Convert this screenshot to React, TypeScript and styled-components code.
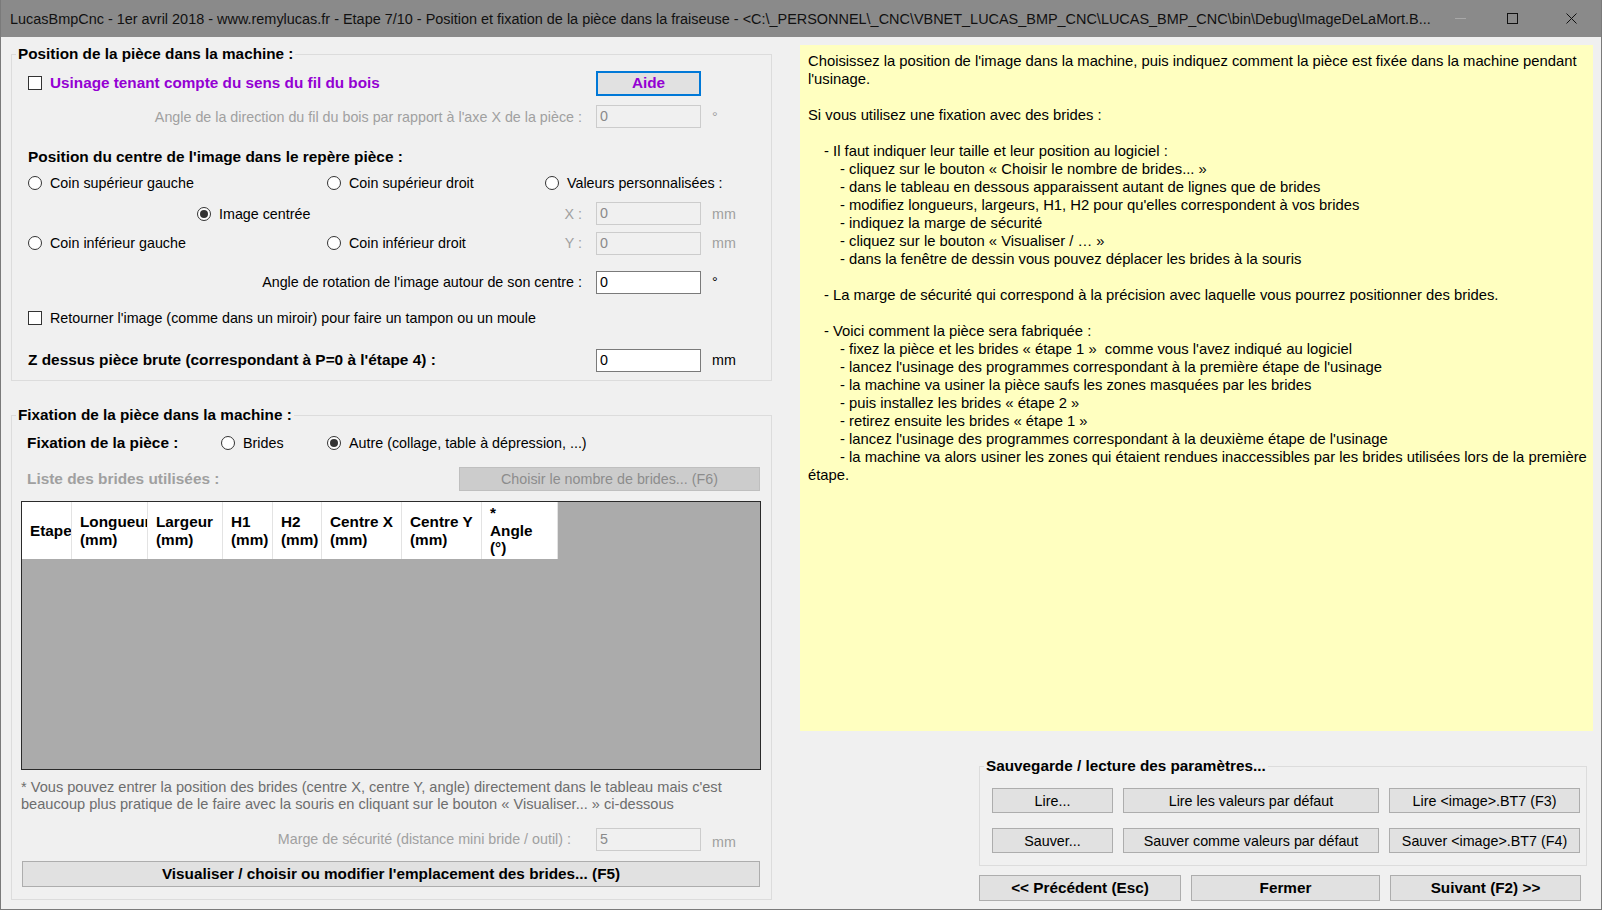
import styled, { createGlobalStyle } from "styled-components";

const GlobalStyle = createGlobalStyle`
	html, body {
		margin: 0;
		padding: 0;
		background: #f0f0f0;
	}
	body {
		font-family: "Liberation Sans", Arial, sans-serif;
		color: #000;
	}
`;

const Window = styled.div`
	width: 1602px;
	height: 910px;
	box-sizing: border-box;
	display: flex;
	flex-direction: column;
	border: 1px solid #7a7a7a;
	border-top: none;
	background: #f0f0f0;
	overflow: hidden;
`;

const TitleBar = styled.div`
	flex: none;
	height: 37px;
	display: flex;
	align-items: center;
	background: #8a8a8a;
	padding-left: 9px;
`;

const TitleText = styled.div`
	flex: 1;
	min-width: 0;
	font-family: "Liberation Sans", Arial, sans-serif;
	font-size: 14.45px;
	color: #111;
	white-space: nowrap;
	overflow: hidden;
`;

const WinControls = styled.div`
	flex: none;
	display: flex;
	height: 100%;
`;

const WinButton = styled.div<{ $w: number }>`
	width: ${(p) => p.$w}px;
	height: 100%;
	display: flex;
	align-items: center;
	justify-content: center;
`;

const Client = styled.div`
	flex: 1;
	display: flex;
	gap: 28px;
	padding: 8px 8px 0 10px;
`;

const LeftColumn = styled.div`
	width: 761px;
	flex: none;
	display: flex;
	flex-direction: column;
`;

const RightColumn = styled.div`
	width: 793px;
	flex: none;
	display: flex;
	flex-direction: column;
`;

const Group = styled.fieldset<{ $mt?: number }>`
	margin: ${(p) => p.$mt ?? 0}px 0 0 0;
	padding: 0;
	min-width: 0;
	border: 1px solid #dcdcdc;
`;

const Legend = styled.legend`
	margin-left: 4px;
	padding: 0 2px;
	font-size: 15.3px;
	font-weight: bold;
	line-height: 18px;
`;

const GroupBody = styled.div<{ $pad: string }>`
	display: flex;
	flex-direction: column;
	padding: ${(p) => p.$pad};
`;

const Row = styled.div<{ $h: number; $mt?: number; $pl?: number }>`
	flex: none;
	display: flex;
	align-items: center;
	height: ${(p) => p.$h}px;
	margin-top: ${(p) => p.$mt ?? 0}px;
	padding-left: ${(p) => p.$pl ?? 0}px;
`;

const Slot = styled.div<{ $w: number; $pl?: number }>`
	flex: none;
	width: ${(p) => p.$w}px;
	box-sizing: border-box;
	padding-left: ${(p) => p.$pl ?? 0}px;
	display: flex;
	align-items: center;
`;

const Spacer = styled.div`
	flex: 1;
`;

const Heading = styled.div<{ $muted?: boolean }>`
	font-size: 15.4px;
	font-weight: bold;
	color: ${(p) => (p.$muted ? "#a0a0a0" : "#000")};
	white-space: nowrap;
`;

const Option = styled.div<{ $bold?: boolean; $color?: string }>`
	display: inline-flex;
	align-items: center;
	gap: 8px;
	font-size: ${(p) => (p.$bold ? "15.3px" : "14.3px")};
	font-weight: ${(p) => (p.$bold ? "bold" : "normal")};
	color: ${(p) => p.$color ?? "#000"};
	white-space: nowrap;
`;

const CheckBox = styled.span`
	width: 14px;
	height: 14px;
	box-sizing: border-box;
	border: 1px solid #333;
	background: #fff;
	flex: none;
`;

const RadioDot = styled.span<{ $on?: boolean }>`
	width: 14px;
	height: 14px;
	box-sizing: border-box;
	border: 1px solid #333;
	border-radius: 50%;
	background: #fff;
	flex: none;
	display: flex;
	align-items: center;
	justify-content: center;

	&::after {
		content: "";
		width: 8px;
		height: 8px;
		border-radius: 50%;
		background: #333;
		display: ${(p) => (p.$on ? "block" : "none")};
	}
`;

const FieldLabel = styled.div<{ $disabled?: boolean }>`
	flex: 1;
	text-align: right;
	font-size: 14.3px;
	color: ${(p) => (p.$disabled ? "#a0a0a0" : "#000")};
	white-space: nowrap;
`;

const TextBox = styled.div<{ $disabled?: boolean; $gap?: number }>`
	flex: none;
	width: 105px;
	height: 23px;
	box-sizing: border-box;
	margin-left: ${(p) => p.$gap ?? 14}px;
	padding-left: 3px;
	border: 1px solid ${(p) => (p.$disabled ? "#cccccc" : "#7a7a7a")};
	background: ${(p) => (p.$disabled ? "#f0f0f0" : "#fff")};
	color: ${(p) => (p.$disabled ? "#8a8a8a" : "#000")};
	font-size: 14.3px;
	line-height: 21px;
`;

const Unit = styled.div<{ $disabled?: boolean; $dy?: number }>`
	flex: none;
	width: 40px;
	margin-left: 11px;
	font-size: 14.3px;
	color: ${(p) => (p.$disabled ? "#a0a0a0" : "#000")};
	transform: translateY(${(p) => p.$dy ?? 0}px);
`;

const Button = styled.div<{
	$w?: number;
	$h: number;
	$bold?: boolean;
	$disabled?: boolean;
	$focus?: boolean;
	$color?: string;
}>`
	flex: none;
	width: ${(p) => (p.$w ? `${p.$w}px` : "auto")};
	height: ${(p) => p.$h}px;
	box-sizing: border-box;
	display: flex;
	align-items: center;
	justify-content: center;
	border: ${(p) =>
		p.$focus
			? "2px solid #0078d7"
			: `1px solid ${p.$disabled ? "#bfbfbf" : "#adadad"}`};
	background: ${(p) => (p.$disabled ? "#cccccc" : "#e1e1e1")};
	color: ${(p) => (p.$disabled ? "#8c8c8c" : p.$color ?? "#000")};
	font-size: ${(p) => (p.$bold ? "15.3px" : "14.3px")};
	font-weight: ${(p) => (p.$bold ? "bold" : "normal")};
	white-space: nowrap;
`;

const Grid = styled.div`
	flex: none;
	margin-top: 4px;
	height: 269px;
	box-sizing: border-box;
	border: 1px solid #2a2a2a;
	background: #ababab;
	display: flex;
	flex-direction: column;
`;

const GridHeader = styled.div`
	display: flex;
	height: 57px;
	align-self: flex-start;
	background: #fff;
`;

const HeaderCell = styled.div<{ $w: number }>`
	width: ${(p) => p.$w}px;
	box-sizing: border-box;
	border-right: 1px solid #e3e3e3;
	padding-left: 8px;
	display: flex;
	align-items: center;
	overflow: hidden;
	white-space: pre;
	font-size: 15.3px;
	font-weight: bold;
	line-height: 17.5px;
`;

const Footnote = styled.div`
	margin-top: 9px;
	font-size: 14.6px;
	line-height: 17px;
	color: #6d6d6d;
	white-space: nowrap;
`;

const HelpPanel = styled.div`
	height: 686px;
	flex: none;
	box-sizing: border-box;
	background: #ffffc0;
	padding: 7px 4px 0 8px;
	font-size: 14.8px;
	line-height: 18px;
`;

const HelpLine = styled.div<{ $indent?: number }>`
	min-height: 18px;
	text-indent: ${(p) => p.$indent ?? 0}px;
	white-space: pre-wrap;
`;

const SaveGroup = styled(Group)`
	width: 608px;
	align-self: flex-end;
	margin-right: 6px;
	box-sizing: border-box;
`;

const ButtonGrid = styled.div<{ $cols: string }>`
	display: grid;
	grid-template-columns: ${(p) => p.$cols};
	column-gap: 10px;
	row-gap: 15px;
`;

const NavRow = styled(ButtonGrid)`
	align-self: flex-end;
	margin: 9px 12px 0 0;
`;

const headers = [
	{ w: 50, t: "Etape" },
	{ w: 76, t: "Longueur\n(mm)" },
	{ w: 75, t: "Largeur\n(mm)" },
	{ w: 50, t: "H1\n(mm)" },
	{ w: 49, t: "H2\n(mm)" },
	{ w: 80, t: "Centre X\n(mm)" },
	{ w: 80, t: "Centre Y\n(mm)" },
	{ w: 76, t: "*\nAngle\n(°)" },
];

const helpLines: { i?: number; t: string }[] = [
	{
		t: "Choisissez la position de l'image dans la machine, puis indiquez comment la pièce est fixée dans la machine pendant l'usinage.",
	},
	{ t: "" },
	{ t: "Si vous utilisez une fixation avec des brides :" },
	{ t: "" },
	{ i: 16, t: "- Il faut indiquer leur taille et leur position au logiciel :" },
	{ i: 32, t: "- cliquez sur le bouton « Choisir le nombre de brides... »" },
	{ i: 32, t: "- dans le tableau en dessous apparaissent autant de lignes que de brides" },
	{ i: 32, t: "- modifiez longueurs, largeurs, H1, H2 pour qu'elles correspondent à vos brides" },
	{ i: 32, t: "- indiquez la marge de sécurité" },
	{ i: 32, t: "- cliquez sur le bouton « Visualiser / … »" },
	{ i: 32, t: "- dans la fenêtre de dessin vous pouvez déplacer les brides à la souris" },
	{ t: "" },
	{
		i: 16,
		t: "- La marge de sécurité qui correspond à la précision avec laquelle vous pourrez positionner des brides.",
	},
	{ t: "" },
	{ i: 16, t: "- Voici comment la pièce sera fabriquée :" },
	{ i: 32, t: "- fixez la pièce et les brides « étape 1 »  comme vous l'avez indiqué au logiciel" },
	{ i: 32, t: "- lancez l'usinage des programmes correspondant à la première étape de l'usinage" },
	{ i: 32, t: "- la machine va usiner la pièce saufs les zones masquées par les brides" },
	{ i: 32, t: "- puis installez les brides « étape 2 »" },
	{ i: 32, t: "- retirez ensuite les brides « étape 1 »" },
	{ i: 32, t: "- lancez l'usinage des programmes correspondant à la deuxième étape de l'usinage" },
	{
		i: 32,
		t: "- la machine va alors usiner les zones qui étaient rendues inaccessibles par les brides utilisées lors de la première étape.",
	},
];

function App() {
	return (
		<>
			<GlobalStyle />
			<Window>
				<TitleBar>
					<TitleText>
						LucasBmpCnc - 1er avril 2018 - www.remylucas.fr - Etape 7/10 - Position et
						fixation de la pièce dans la fraiseuse -
						&lt;C:\_PERSONNEL\_CNC\VBNET_LUCAS_BMP_CNC\LUCAS_BMP_CNC\bin\Debug\ImageDeLaMort.B...
					</TitleText>
					<WinControls>
						<WinButton $w={46}>
							<svg width="11" height="11" viewBox="0 0 11 11">
								<line x1="0" y1="5.5" x2="11" y2="5.5" stroke="#a8a8a8" strokeWidth="1" />
							</svg>
						</WinButton>
						<WinButton $w={58}>
							<svg width="11" height="11" viewBox="0 0 11 11">
								<rect x="0.5" y="0.5" width="10" height="10" fill="none" stroke="#111" strokeWidth="1" />
							</svg>
						</WinButton>
						<WinButton $w={60}>
							<svg width="11" height="11" viewBox="0 0 11 11">
								<path d="M0.5 0.5 L10.5 10.5 M10.5 0.5 L0.5 10.5" stroke="#111" strokeWidth="1" />
							</svg>
						</WinButton>
					</WinControls>
				</TitleBar>

				<Client>
					<LeftColumn>
						<Group>
							<Legend>Position de la pièce dans la machine :</Legend>
							<GroupBody $pad="0 19px 5px 16px">
								<Row $h={40}>
									<Option $bold $color="#9400d3">
										<CheckBox />
										Usinage tenant compte du sens du fil du bois
									</Option>
									<Spacer />
									<Button $w={105} $h={25} $bold $focus $color="#9400d3" style={{ marginRight: 51 }}>
										Aide
									</Button>
								</Row>
								<Row $h={27}>
									<FieldLabel $disabled>
										Angle de la direction du fil du bois par rapport à l'axe X de la pièce :
									</FieldLabel>
									<TextBox $disabled>0</TextBox>
									<Unit $disabled>°</Unit>
								</Row>
								<Row $h={20} $mt={17}>
									<Heading>Position du centre de l'image dans le repère pièce :</Heading>
								</Row>
								<Row $h={32}>
									<Slot $w={299}>
										<Option>
											<RadioDot />
											Coin supérieur gauche
										</Option>
									</Slot>
									<Slot $w={218}>
										<Option>
											<RadioDot />
											Coin supérieur droit
										</Option>
									</Slot>
									<Option>
										<RadioDot />
										Valeurs personnalisées :
									</Option>
								</Row>
								<Row $h={29} $pl={169}>
									<Option>
										<RadioDot $on />
										Image centrée
									</Option>
									<FieldLabel $disabled>X :</FieldLabel>
									<TextBox $disabled>0</TextBox>
									<Unit $disabled>mm</Unit>
								</Row>
								<Row $h={30}>
									<Slot $w={299}>
										<Option>
											<RadioDot />
											Coin inférieur gauche
										</Option>
									</Slot>
									<Option>
										<RadioDot />
										Coin inférieur droit
									</Option>
									<FieldLabel $disabled>Y :</FieldLabel>
									<TextBox $disabled>0</TextBox>
									<Unit $disabled>mm</Unit>
								</Row>
								<Row $h={48}>
									<FieldLabel>Angle de rotation de l'image autour de son centre :</FieldLabel>
									<TextBox>0</TextBox>
									<Unit>°</Unit>
								</Row>
								<Row $h={24}>
									<Option>
										<CheckBox />
										Retourner l'image (comme dans un miroir) pour faire un tampon ou un moule
									</Option>
								</Row>
								<Row $h={30} $mt={15}>
									<Heading>Z dessus pièce brute (correspondant à P=0 à l'étape 4) :</Heading>
									<Spacer />
									<TextBox>0</TextBox>
									<Unit>mm</Unit>
								</Row>
							</GroupBody>
						</Group>

						<Group $mt={25}>
							<Legend>Fixation de la pièce dans la machine :</Legend>
							<GroupBody $pad="0 10px 12px 9px">
								<Row $h={37}>
									<Slot $w={200} $pl={6}>
										<Heading>Fixation de la pièce :</Heading>
									</Slot>
									<Slot $w={106}>
										<Option>
											<RadioDot />
											Brides
										</Option>
									</Slot>
									<Option>
										<RadioDot $on />
										Autre (collage, table à dépression, ...)
									</Option>
								</Row>
								<Row $h={36} $pl={6}>
									<Heading $muted>Liste des brides utilisées :</Heading>
									<Spacer />
									<Button $w={301} $h={24} $disabled style={{ marginRight: 1 }}>
										Choisir le nombre de brides... (F6)
									</Button>
								</Row>
								<Grid>
									<GridHeader>
										{headers.map((h) => (
											<HeaderCell key={h.t} $w={h.w}>
												{h.t}
											</HeaderCell>
										))}
									</GridHeader>
								</Grid>
								<Footnote>
									* Vous pouvez entrer la position des brides (centre X, centre Y, angle)
									directement dans le tableau mais c'est
									<br />
									beaucoup plus pratique de le faire avec la souris en cliquant sur le bouton «
									Visualiser... » ci-dessous
								</Footnote>
								<Row $h={44} $mt={4}>
									<FieldLabel $disabled>Marge de sécurité (distance mini bride / outil) :</FieldLabel>
									<TextBox $disabled $gap={25}>
										5
									</TextBox>
									<Unit $disabled $dy={3} style={{ width: 49 }}>
										mm
									</Unit>
								</Row>
								<Button $h={26} $bold style={{ margin: "0 1px" }}>
									Visualiser / choisir ou modifier l'emplacement des brides... (F5)
								</Button>
							</GroupBody>
						</Group>
					</LeftColumn>

					<RightColumn>
						<HelpPanel>
							{helpLines.map((l, i) => (
								<HelpLine key={i} $indent={l.i}>
									{l.t}
								</HelpLine>
							))}
						</HelpPanel>

						<SaveGroup $mt={26}>
							<Legend>Sauvegarde / lecture des paramètres...</Legend>
							<GroupBody $pad="13px 0 12px 12px">
								<ButtonGrid $cols="121px 256px 191px">
									<Button $h={25}>Lire...</Button>
									<Button $h={25}>Lire les valeurs par défaut</Button>
									<Button $h={25}>Lire &lt;image&gt;.BT7 (F3)</Button>
									<Button $h={25}>Sauver...</Button>
									<Button $h={25}>Sauver comme valeurs par défaut</Button>
									<Button $h={25}>Sauver &lt;image&gt;.BT7 (F4)</Button>
								</ButtonGrid>
							</GroupBody>
						</SaveGroup>

						<NavRow $cols="202px 189px 191px">
							<Button $h={26} $bold>
								&lt;&lt; Précédent (Esc)
							</Button>
							<Button $h={26} $bold>
								Fermer
							</Button>
							<Button $h={26} $bold>
								Suivant (F2) &gt;&gt;
							</Button>
						</NavRow>
					</RightColumn>
				</Client>
			</Window>
		</>
	);
}

export default App;
